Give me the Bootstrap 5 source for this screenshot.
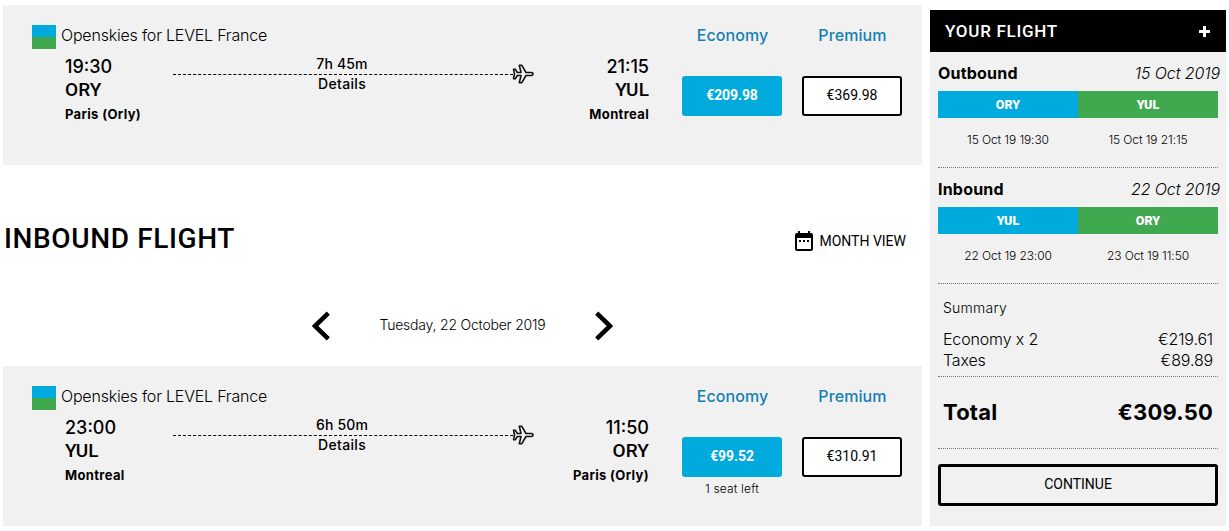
<!doctype html>
<html lang="en">

<head>
    <meta charset="utf-8">
    <meta name="viewport" content="width=device-width, initial-scale=1">
    <title>Select your flight</title>
    <link href="https://cdn.jsdelivr.net/npm/bootstrap@5.3.5/dist/css/bootstrap.min.css" rel="stylesheet">
    <style>
        body {
            font-family: Inter, Roboto, sans-serif;
            color: #000;
            line-height: 20px;
            white-space: nowrap;
            overflow: hidden;
        }

        .page {
            gap: 8px;
            padding: 5px 3px 0;
        }

        .results {
            width: 919px;
        }

        .flight-box {
            height: 160px;
            padding: 20px 20px 0 29px;
            gap: 33px;
            background-color: #f1f1f1;
        }

        .carrier {
            height: 24px;
            margin-bottom: 5px;
            gap: 5px;
            font-weight: 300;
            letter-spacing: -.2px;
        }

        .carrier-logo {
            width: 24px;
            height: 24px;
            background: linear-gradient(#00aadd 50%, #40a84e 50%);
        }

        .legs {
            padding-left: 33px;
        }

        .stop-from {
            width: 108px;
        }

        .stop-to {
            width: 136px;
            text-align: right;
        }

        .hour,
        .code {
            font-size: 18px;
            line-height: 24px;
            font-weight: 500;
        }

        .hour {
            padding-top: 1px;
            height: 24px;
        }

        .code {
            font-family: Roboto, sans-serif;
            font-size: 19px;
            letter-spacing: .1px;
        }

        .city {
            font-size: 13px;
            line-height: 24px;
            font-weight: 700;
            letter-spacing: .35px;
        }

        .route {
            width: 340px;
            font-size: 14px;
            font-weight: 500;
            letter-spacing: .15px;
        }

        .route-line {
            border-top: 1px dashed #000;
        }

        .route-text {
            padding-right: 2px;
        }

        .plane {
            position: absolute;
            left: 339px;
            top: 10px;
        }

        .details {
            margin-top: -1px;
            letter-spacing: .33px;
        }

        .fares {
            gap: 20px;
        }

        .fare {
            width: 100px;
            text-align: center;
        }

        .fare-name {
            height: 20px;
            margin-bottom: 31px;
            padding-left: 1px;
            color: #147eb5;
            font-weight: 500;
            letter-spacing: .1px;
        }

        .btn-fare {
            --bs-btn-padding-x: 0;
            --bs-btn-padding-y: 0;
            --bs-btn-border-radius: 3px;
            --bs-btn-border-width: 2px;
            --bs-btn-font-size: 14px;
            --bs-btn-color: #000;
            --bs-btn-bg: #fff;
            --bs-btn-border-color: #000;
            --bs-btn-hover-bg: #eee;
            --bs-btn-hover-border-color: #000;
            height: 40px;
            padding-bottom: 2px;
            font-family: Roboto, sans-serif;
            font-weight: 400;
        }

        .btn-fare.chosen {
            --bs-btn-color: #fff;
            --bs-btn-bg: #00aadd;
            --bs-btn-border-color: #00aadd;
            font-weight: 700;
            letter-spacing: -.1px;
        }

        .seats {
            padding-top: 2px;
            font-size: 12px;
            font-weight: 300;
            letter-spacing: .17px;
        }

        .section-head {
            height: 30px;
            margin-top: 59px;
            padding-right: 16px;
        }

        .section-head h2 {
            padding-left: 1px;
            font: 500 28px/30px Roboto, sans-serif;
            letter-spacing: .62px;
        }

        .month-view {
            gap: 6px;
            padding-top: 4px;
            font: 400 14px/20px Roboto, sans-serif;
        }

        .day-nav {
            height: 30px;
            margin: 57px 0 25px;
            gap: 50px;
            font-size: 14px;
            font-weight: 300;
            letter-spacing: -.21px;
        }

        .day-nav span {
            padding-bottom: 2px;
        }

        .trip {
            width: 296px;
            height: 516px;
            margin-top: 5px;
            background-color: #f1f1f1;
        }

        .trip-head {
            height: 42px;
            padding: 0 16px 0 15px;
            background-color: #000;
            color: #fff;
            font: 500 17px/42px Roboto, sans-serif;
            letter-spacing: .72px;
        }

        .trip-body {
            padding: 0 8px;
        }

        .leg {
            height: 116px;
            border-bottom: 1px dotted #777;
        }

        .leg-head {
            height: 39px;
            padding-top: 11px;
            margin-right: -2px;
            font-weight: 700;
            letter-spacing: .2px;
        }

        .leg-head em {
            font-weight: 300;
            letter-spacing: -.1px;
        }

        .band {
            height: 27px;
            color: #fff;
            font: 900 12.5px/27px Roboto, sans-serif;
            letter-spacing: .1px;
        }

        .band-from {
            background-color: #00aadd;
        }

        .band-to {
            background-color: #40a84e;
        }

        .leg-times {
            padding-top: 12px;
            font-size: 12px;
            font-weight: 300;
            letter-spacing: -.1px;
        }

        .summary {
            height: 93px;
            padding: 14px 5px 0;
            border-bottom: 1px dotted #777;
            font-weight: 300;
            letter-spacing: -.15px;
        }

        .summary-title {
            margin-bottom: 11px;
            font-size: 14px;
            letter-spacing: .25px;
        }

        .summary-row {
            height: 21px;
        }

        .total {
            height: 72px;
            padding: 0 5px;
            border-bottom: 1px dotted #777;
            font-size: 22px;
            line-height: 71px;
            font-weight: 700;
            letter-spacing: .2px;
        }

        .btn-continue {
            --bs-btn-padding-y: 0;
            --bs-btn-font-size: 14px;
            --bs-btn-color: #000;
            --bs-btn-border-color: #000;
            --bs-btn-border-width: 3px;
            --bs-btn-border-radius: 3px;
            --bs-btn-hover-color: #fff;
            --bs-btn-hover-bg: #000;
            height: 42px;
            margin-top: 15px;
            padding-bottom: 2px;
            font-family: Roboto, sans-serif;
        }
    </style>
</head>

<body>

    <svg class="d-none">
        <symbol id="plane" viewBox="0 0 22 20">
            <path d="M1.5 5.2H3.3L5.3 8.5H9L7.3 1.3H9.8L14 8.5H19.2C20.6 8.5 21 9.2 21 10S20.6 11.5 19.2 11.5H14L9.8 18.7H7.3L9 11.5H5.3L3.3 14.8H1.5L2.5 10Z" fill="#f1f1f1" stroke="#111" stroke-width="1.6" stroke-linejoin="round" />
        </symbol>
    </svg>

    <div class="page d-flex align-items-start">
        <main class="results flex-shrink-0">

            <div class="flight-box d-flex">
                <div class="flex-grow-1">
                    <div class="carrier d-flex">
                        <div class="carrier-logo"></div>
                        <div>Openskies for LEVEL France</div>
                    </div>
                    <div class="legs d-flex">
                        <div class="stop-from">
                            <div class="hour">19:30</div>
                            <div class="code">ORY</div>
                            <div class="city">Paris (Orly)</div>
                        </div>
                        <div class="route text-center position-relative">
                            <div class="route-text">7h 45m</div>
                            <div class="route-line"></div>
                            <div class="route-text details">Details</div>
                            <svg class="plane" width="22" height="20"><use href="#plane" /></svg>
                        </div>
                        <div class="stop-to">
                            <div class="hour">21:15</div>
                            <div class="code">YUL</div>
                            <div class="city">Montreal</div>
                        </div>
                    </div>
                </div>
                <div class="fares d-flex">
                    <div class="fare">
                        <div class="fare-name">Economy</div>
                        <button class="btn btn-fare chosen w-100">€209.98</button>
                    </div>
                    <div class="fare">
                        <div class="fare-name">Premium</div>
                        <button class="btn btn-fare w-100">€369.98</button>
                    </div>
                </div>
            </div>

            <div class="section-head d-flex justify-content-between">
                <h2 class="mb-0">INBOUND FLIGHT</h2>
                <div class="month-view d-flex align-items-center">
                    <svg width="18" height="20" viewBox="0 0 18 20">
                        <path d="M2 2H16Q18 2 18 4V18Q18 20 16 20H2Q0 20 0 18V4Q0 2 2 2ZM2 7V18H16V7Z" fill-rule="evenodd" />
                        <path d="M3 0H5V3H3ZM13 0H15V3H13ZM4 9H6V11H4ZM8 9H10V11H8ZM12 9H14V11H12Z" />
                    </svg>
                    <span>MONTH VIEW</span>
                </div>
            </div>

            <div class="day-nav d-flex justify-content-center align-items-center">
                <svg width="18" height="30" viewBox="0 0 18 30"><path d="M16.3 2.2L3 15L16.3 27.8" fill="none" stroke="#000" stroke-width="4.6" /></svg>
                <span>Tuesday, 22 October 2019</span>
                <svg width="18" height="30" viewBox="0 0 18 30"><path d="M1.7 2.2L15 15L1.7 27.8" fill="none" stroke="#000" stroke-width="4.6" /></svg>
            </div>

            <div class="flight-box d-flex">
                <div class="flex-grow-1">
                    <div class="carrier d-flex">
                        <div class="carrier-logo"></div>
                        <div>Openskies for LEVEL France</div>
                    </div>
                    <div class="legs d-flex">
                        <div class="stop-from">
                            <div class="hour">23:00</div>
                            <div class="code">YUL</div>
                            <div class="city">Montreal</div>
                        </div>
                        <div class="route text-center position-relative">
                            <div class="route-text">6h 50m</div>
                            <div class="route-line"></div>
                            <div class="route-text details">Details</div>
                            <svg class="plane" width="22" height="20"><use href="#plane" /></svg>
                        </div>
                        <div class="stop-to">
                            <div class="hour">11:50</div>
                            <div class="code">ORY</div>
                            <div class="city">Paris (Orly)</div>
                        </div>
                    </div>
                </div>
                <div class="fares d-flex">
                    <div class="fare">
                        <div class="fare-name">Economy</div>
                        <button class="btn btn-fare chosen w-100">€99.52</button>
                        <div class="seats">1 seat left</div>
                    </div>
                    <div class="fare">
                        <div class="fare-name">Premium</div>
                        <button class="btn btn-fare w-100">€310.91</button>
                    </div>
                </div>
            </div>
        </main>

        <aside class="trip flex-shrink-0">
            <div class="trip-head d-flex justify-content-between align-items-center">
                <span>YOUR FLIGHT</span>
                <svg width="11" height="11" viewBox="0 0 11 11"><path d="M5.5 0V11M0 5.5H11" stroke="#fff" stroke-width="3" /></svg>
            </div>
            <div class="trip-body">
                <div class="leg">
                    <div class="leg-head d-flex justify-content-between">
                        <span>Outbound</span><em>15 Oct 2019</em>
                    </div>
                    <div class="band row g-0 text-center">
                        <div class="band-from col-6">ORY</div>
                        <div class="band-to col-6">YUL</div>
                    </div>
                    <div class="leg-times row g-0 text-center">
                        <div class="col-6">15 Oct 19 19:30</div>
                        <div class="col-6">15 Oct 19 21:15</div>
                    </div>
                </div>
                <div class="leg">
                    <div class="leg-head d-flex justify-content-between">
                        <span>Inbound</span><em>22 Oct 2019</em>
                    </div>
                    <div class="band row g-0 text-center">
                        <div class="band-from col-6">YUL</div>
                        <div class="band-to col-6">ORY</div>
                    </div>
                    <div class="leg-times row g-0 text-center">
                        <div class="col-6">22 Oct 19 23:00</div>
                        <div class="col-6">23 Oct 19 11:50</div>
                    </div>
                </div>
                <div class="summary">
                    <div class="summary-title">Summary</div>
                    <div class="summary-row d-flex justify-content-between"><span>Economy x 2</span><span>€219.61</span></div>
                    <div class="summary-row d-flex justify-content-between"><span>Taxes</span><span>€89.89</span></div>
                </div>
                <div class="total d-flex justify-content-between"><span>Total</span><span>€309.50</span></div>
                <button class="btn btn-continue w-100">CONTINUE</button>
            </div>
        </aside>
    </div>

    <script src="https://cdn.jsdelivr.net/npm/bootstrap@5.3.5/dist/js/bootstrap.bundle.min.js"></script>

</body>

</html>
